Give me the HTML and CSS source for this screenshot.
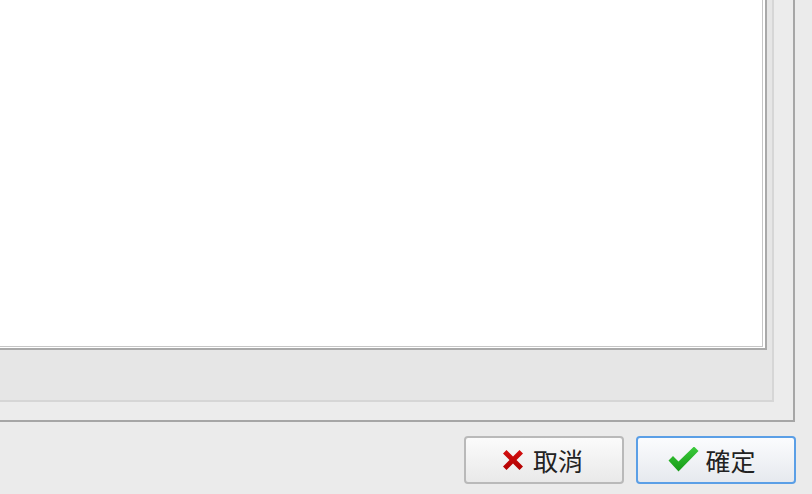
FILE: index.html
```html
<!DOCTYPE html>
<html lang="zh-TW">
<head>
    <meta charset="UTF-8">
    <meta name="viewport" content="width=device-width, initial-scale=1.0">
    <title>對話框</title>
    <link rel="stylesheet" href="styles.css">
</head>
<body>
    <div class="dialog">
        <div class="panel">
            <div class="text-area"></div>
        </div>
    </div>

    <div class="button-bar">
        <button class="btn btn-cancel">
            <svg class="icon" width="20" height="20" viewBox="0 0 20 20">
                <defs>
                    <linearGradient id="red" x1="0" y1="0" x2="0" y2="1">
                        <stop offset="0" stop-color="#d41010"/>
                        <stop offset="1" stop-color="#b00000"/>
                    </linearGradient>
                </defs>
                <polygon fill="url(#red)" points="0,3.5 3.5,0 10,6.5 16.5,0 20,3.5 13.5,10 20,16.5 16.5,20 10,13.5 3.5,20 0,16.5 6.5,10"/>
            </svg>
            <span>取消</span>
        </button>
        <button class="btn btn-ok">
            <svg class="icon" width="32" height="26" viewBox="0 0 32 26">
                <defs>
                    <linearGradient id="green" x1="0" y1="0" x2="0" y2="1">
                        <stop offset="0" stop-color="#3ccb3c"/>
                        <stop offset="1" stop-color="#169a16"/>
                    </linearGradient>
                </defs>
                <polygon fill="url(#green)" points="0.5,13.5 5,9 10.5,14.5 26,-0.5 30.5,4 10.5,24.5"/>
            </svg>
            <span>確定</span>
        </button>
    </div>
</body>
</html>
```

FILE: styles.css
```css
body {
    margin: 0;
    background: #ebebeb;
    font-family: "Noto Sans CJK TC", "Noto Sans", sans-serif;
    overflow: hidden;
}

/* outer frame, only the right and bottom edges are in view */
.dialog {
    width: 793px;
    height: 420px;
    border-right: 2px solid #a6a6a6;
    border-bottom: 2px solid #a6a6a6;
    background: #ececec;
}

.panel {
    width: 772px;
    height: 400px;
    background: #e6e6e6;
    border-right: 2px solid #d6d6d6;
    border-bottom: 2px solid #d6d6d6;
}

.text-area {
    width: 765px;
    height: 348px;
    background: #fff;
    border-right: 2px solid #a9a9a9;
    border-bottom: 2px solid #a9a9a9;
    box-shadow: inset -2px -1px 0 #fff, inset -3px -2px 0 #c6c6c6;
}

.button-bar {
    display: flex;
    justify-content: flex-end;
    gap: 12px;
    padding: 14px 16px 0 0;
}

.btn {
    display: flex;
    align-items: center;
    justify-content: center;
    width: 160px;
    height: 48px;
    border-radius: 4px;
    font-family: inherit;
    font-size: 25px;
    color: #222;
    cursor: pointer;
    padding: 0;
}

.btn-cancel {
    gap: 10px;
    border: 2px solid #b9b9b9;
    background: linear-gradient(#fbfbfb, #e9e9e9);
}

.btn-cancel .icon {
    margin-left: -2px;
}

.btn-ok {
    gap: 5px;
    border: 2px solid #5b9fe6;
    background: linear-gradient(#fbfcfe, #e6e9ee);
}

.btn-ok .icon {
    margin-left: -8px;
}
```
